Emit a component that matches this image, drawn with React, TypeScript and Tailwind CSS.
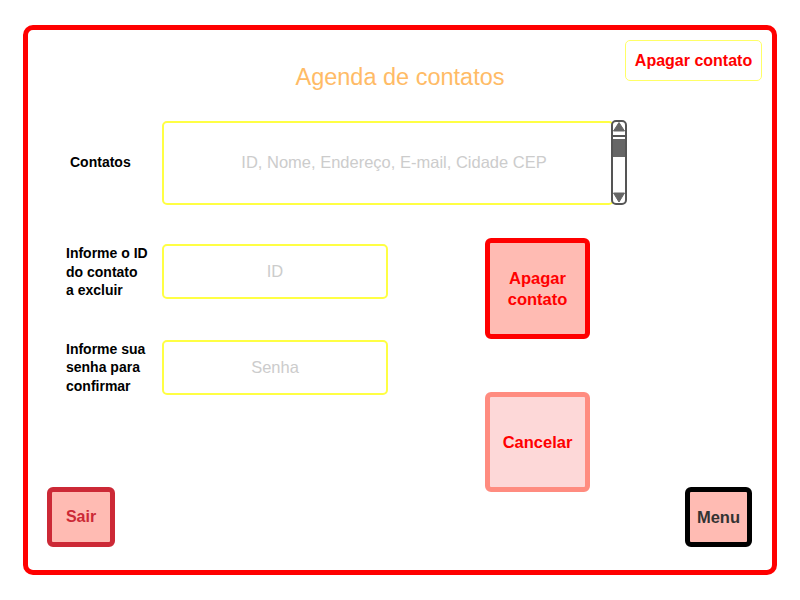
import { FC } from 'react'

const font = { fontFamily: '"Liberation Sans", Arial, sans-serif' }

// barra de rolagem da lista de contatos
const ScrollBar: FC = () => (
  <svg width="16" height="85" viewBox="0 0 16 85" className="-ml-[3px] shrink-0">
    <rect x="1" y="1" width="14" height="83" rx="4" fill="#fff" stroke="#555" strokeWidth="2" />
    <path d="M2.5 11 L8 2.5 L13.5 11 Z" fill="#666" strokeLinejoin="round" stroke="#666" strokeWidth="1" />
    <rect x="2" y="15" width="12" height="2" fill="#555" />
    <rect x="2" y="19" width="12" height="18" fill="#666" />
    <path d="M2.5 73 L8 82 L13.5 73 Z" fill="#666" strokeLinejoin="round" stroke="#666" strokeWidth="1" />
  </svg>
)

type FieldProps = {
  label: string[]
  placeholder: string
}
const Field: FC<FieldProps> = ({ label, placeholder }) => (
  <div className="flex items-center">
    <div className="w-[96px] text-[14px] font-bold leading-[18.5px] text-black">
      {label.map((l) => (
        <p key={l}>{l}</p>
      ))}
    </div>
    <div className="flex h-[55px] w-[226px] items-center justify-center rounded-[5px] border-2 border-[#ffff44] text-[16.5px] text-[#cccccc]">
      {placeholder}
    </div>
  </div>
)

export default function App() {
  return (
    <div className="h-[600px] w-[800px] bg-white pl-[23px] pt-[25px]" style={font}>
      <div className="flex h-[550px] w-[754px] flex-col rounded-[10px] border-[5px] border-[#ff0000]">
        {/* cabeçalho */}
        <div className="grid grid-cols-[1fr_auto_1fr] px-[10px] pt-[10px]">
          <div />
          <h1 className="mt-[23px] text-[23.5px] leading-[28px] text-[#ffbb66]">Agenda de contatos</h1>
          <div className="flex justify-end">
            <div className="flex h-[41px] w-[137px] items-center justify-center rounded-[5px] border border-[#ffff66] text-[16px] font-bold text-[#ff0000]">
              Apagar contato
            </div>
          </div>
        </div>

        {/* lista de contatos */}
        <div className="mt-[29px] flex items-center pl-[42px]">
          <p className="w-[92px] text-[14px] font-bold text-black">Contatos</p>
          <div className="flex h-[84px] w-[452px] items-center justify-center rounded-[5px] border-2 border-[#ffff44] pl-[12px] text-[16.5px] text-[#cccccc]">
            ID, Nome, Endereço, E-mail, Cidade CEP
          </div>
          <ScrollBar />
        </div>

        <div className="flex">
          {/* campos */}
          <div className="flex w-[360px] flex-col">
            <div className="mt-[39px] flex flex-col gap-[40px] pl-[38px]">
              <Field label={['Informe o ID', 'do contato', 'a excluir']} placeholder="ID" />
              <Field label={['Informe sua', 'senha para', 'confirmar']} placeholder="Senha" />
            </div>
            <div className="ml-[19px] mt-[92px] flex h-[60px] w-[68px] items-center justify-center rounded-[6px] border-[5px] border-[#cc2936] bg-[#ffbbb3] text-[16px] font-bold text-[#cc2936]">
              Sair
            </div>
          </div>

          {/* ações */}
          <div className="ml-[97px] flex flex-col">
            <div className="mt-[33px] flex h-[101px] w-[105px] items-center justify-center rounded-[6px] border-[5px] border-[#ff0000] bg-[#ffbbb3] text-center text-[16.5px] font-bold leading-[21px] text-[#ff0000]">
              Apagar
              <br />
              contato
            </div>
            <div className="mt-[53px] flex h-[100px] w-[105px] items-center justify-center rounded-[6px] border-[5px] border-[#ff8c80] bg-[#fdd8d8] text-[16.5px] font-bold text-[#ff0000]">
              Cancelar
            </div>
          </div>

          <div className="ml-[95px] flex flex-col">
            <div className="mt-[282px] flex h-[60px] w-[67px] items-center justify-center rounded-[6px] border-[5px] border-black bg-[#ffbbb3] text-[16.5px] font-bold text-[#333333]">
              Menu
            </div>
          </div>
        </div>
      </div>
    </div>
  )
}
